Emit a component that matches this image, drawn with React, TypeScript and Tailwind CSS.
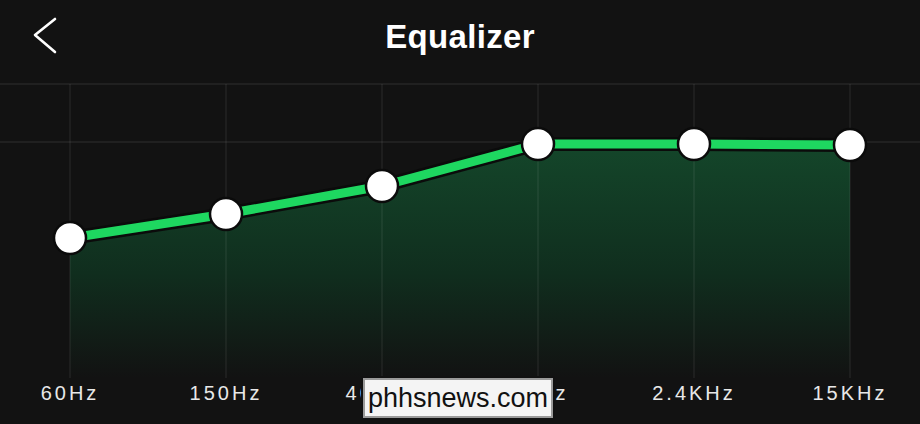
const bands = [
  { label: "60Hz", y: 158 },
  { label: "150Hz", y: 134 },
  { label: "400Hz", y: 106 },
  { label: "1KHz", y: 64 },
  { label: "2.4KHz", y: 64 },
  { label: "15KHz", y: 65 },
];

const colX = (i: number) => 70 + i * 156;

const BackIcon = () => (
  <svg width={28} height={42} viewBox="0 0 28 42" className="absolute left-[31px] top-[14px]">
    <polyline
      points="24,5 4,21 24,38"
      fill="none"
      stroke="#ffffff"
      strokeWidth={2.6}
      strokeLinecap="round"
      strokeLinejoin="round"
    />
  </svg>
);

const EqChart = () => {
  const pts = bands.map((b, i) => `${colX(i)},${b.y}`).join(" ");
  const area = `${colX(0)},298 ${pts} ${colX(5)},298`;

  return (
    <svg width={920} height={300} className="block">
      <defs>
        <linearGradient id="eqFill" x1="0" y1="0" x2="0" y2="1">
          <stop offset="0" stopColor="#14462a" />
          <stop offset="0.55" stopColor="#102e1e" />
          <stop offset="1" stopColor="#121212" />
        </linearGradient>
      </defs>
      <polygon points={area} fill="url(#eqFill)" />
      {/* grid */}
      <line x1={0} y1={4} x2={920} y2={4} stroke="#262626" strokeWidth={1.5} />
      <line x1={0} y1={62} x2={920} y2={62} stroke="#262626" strokeWidth={1.5} />
      {bands.map((_, i) => (
        <line
          key={i}
          x1={colX(i)}
          y1={4}
          x2={colX(i)}
          y2={298}
          stroke="#ffffff"
          strokeOpacity={0.07}
          strokeWidth={1.5}
        />
      ))}
      <polyline points={pts} fill="none" stroke="#0b0b0b" strokeWidth={14} strokeLinejoin="round" />
      <polyline points={pts} fill="none" stroke="#1ed760" strokeWidth={9} strokeLinejoin="round" />
      {bands.map((b, i) => (
        <circle key={b.label} cx={colX(i)} cy={b.y} r={16} fill="#ffffff" stroke="#0b0b0b" strokeWidth={2.5} />
      ))}
    </svg>
  );
};

export default function App() {
  return (
    <div className="relative w-[920px] h-[424px] overflow-hidden bg-[#121212] font-['Liberation_Sans',Arial,sans-serif] text-white">
      <div className="relative flex h-[80px] items-center justify-center">
        <BackIcon />
        <h1 className="text-[33px] font-bold tracking-[0.01em] -mt-[6px]">Equalizer</h1>
      </div>

      <EqChart />

      <div className="-ml-[8px] mt-[1px] grid w-[936px] grid-cols-6">
        {bands.map((b) => (
          <span key={b.label} className="text-center text-[20px] leading-[24px] tracking-[0.15em] text-[#e8e8e8]">
            {b.label}
          </span>
        ))}
      </div>

      <div className="absolute left-[363px] top-[378px] flex h-[40px] w-[190px] items-center border-2 border-[#9a9a9a] bg-[#f4f4f4] pl-[3px] outline outline-2 outline-[#111]">
        <span className="text-[27px] leading-none text-[#111]">phhsnews.com</span>
      </div>
    </div>
  );
}
